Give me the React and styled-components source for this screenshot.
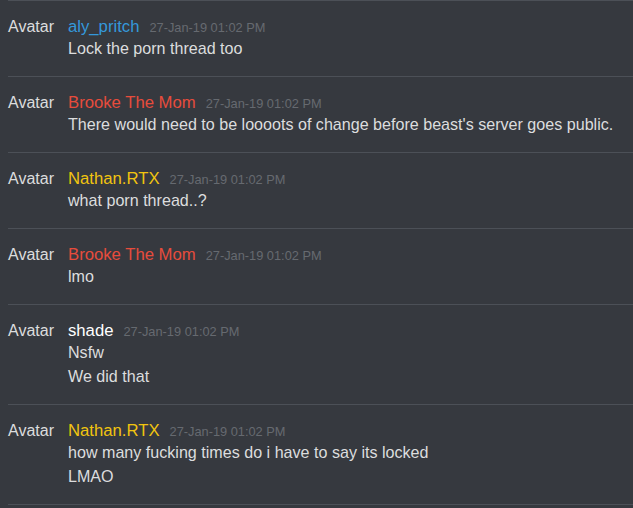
import React from "react";
import styled, { createGlobalStyle } from "styled-components";

const messages = [
  { name: "aly_pritch", color: "#3498db", lines: ["Lock the porn thread too"] },
  {
    name: "Brooke The Mom",
    color: "#e74c3c",
    lines: ["There would need to be loooots of change before beast's server goes public."],
  },
  { name: "Nathan.RTX", color: "#f1c40f", lines: ["what porn thread..?"] },
  { name: "Brooke The Mom", color: "#e74c3c", lines: ["lmo"] },
  { name: "shade", color: "#ffffff", lines: ["Nsfw", "We did that"] },
  {
    name: "Nathan.RTX",
    color: "#f1c40f",
    lines: ["how many fucking times do i have to say its locked", "LMAO"],
  },
];

const App = () => (
  <>
    <GlobalStyle />
    <Feed>
      {messages.map((m, i) => (
        <Group key={i}>
          <Avatar>Avatar</Avatar>
          <Body>
            <Header>
              <Name $color={m.color}>{m.name}</Name>
              <Stamp>27-Jan-19 01:02 PM</Stamp>
            </Header>
            {m.lines.map((line, j) => (
              <Line key={j}>{line}</Line>
            ))}
          </Body>
        </Group>
      ))}
    </Feed>
  </>
);
export default App;

const GlobalStyle = createGlobalStyle`
  html, body {
    margin: 0;
    background: #36393f;
    font-family: "Liberation Sans", Arial, sans-serif;
    color: #dcddde;
    overflow: hidden;
  }
`;

const Feed = styled.div`
  margin-left: 8px;
  border-bottom: 1px solid #4c5057;
`;

const Group = styled.div`
  display: flex;
  border-top: 1px solid #4c5057;
  padding: 16px 0 16px 0;
`;

const Avatar = styled.div`
  width: 60px;
  font-size: 16px;
  line-height: 19px;
  color: #dcddde;
`;

const Body = styled.div`
  display: flex;
  flex-direction: column;
`;

const Header = styled.div`
  height: 19px;
  font-size: 16.7px;
  line-height: 19px;
  white-space: nowrap;
`;

const Name = styled.span`
  color: ${(p) => p.$color};
`;

const Stamp = styled.span`
  margin-left: 10px;
  font-size: 12.8px;
  line-height: 1;
  color: #666a70;
`;

const Line = styled.div`
  font-size: 16.1px;
  line-height: 24px;
  color: #dcddde;
`;
